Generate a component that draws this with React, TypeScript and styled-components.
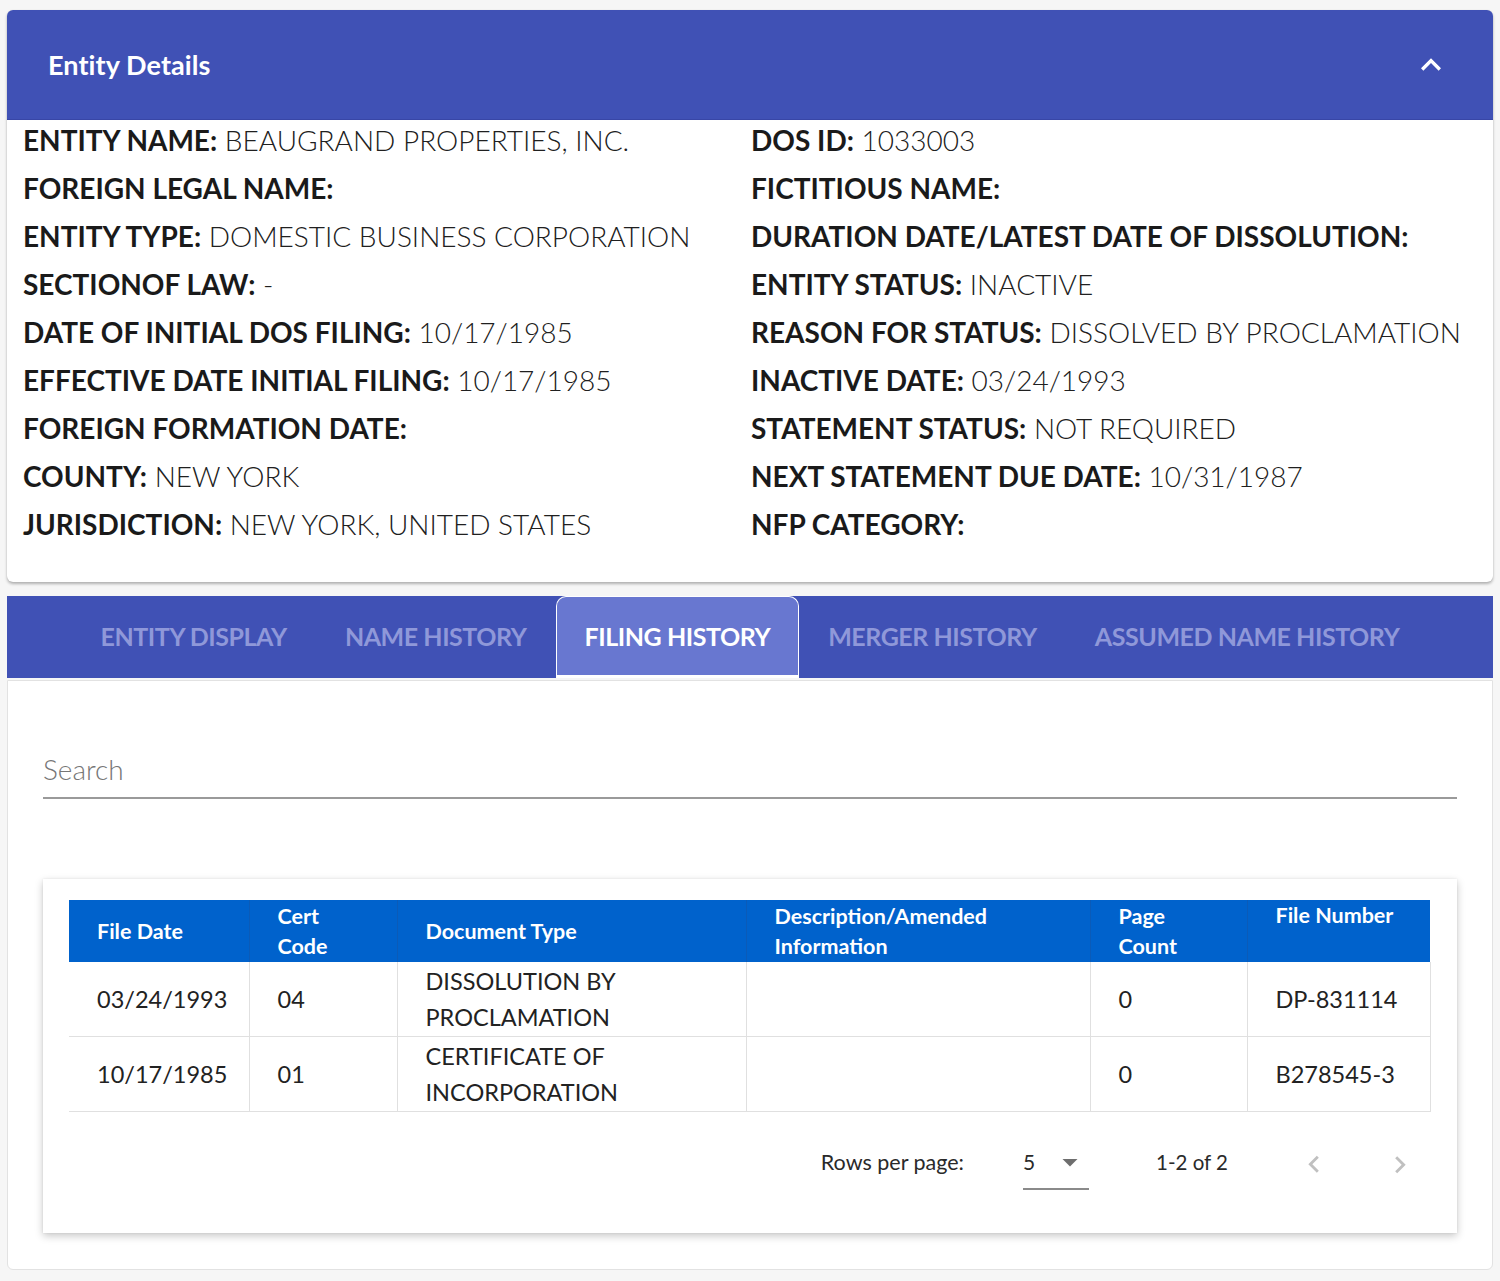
import React from "react";
import styled, { createGlobalStyle } from "styled-components";

const Global = createGlobalStyle`
  html, body { margin: 0; padding: 0; background: #f6f6f6; }
  body { font-family: Lato, "Noto Sans", Arial, sans-serif; color: #1f1f1f; }
  * { box-sizing: border-box; }
`;

const Page = styled.div`
  padding: 10px 7px 11px 7px;
  width: 1500px;
`;

const Card = styled.section`
  background: #fff;
  border-radius: 6px;
  box-shadow: 0 2px 3px rgba(0, 0, 0, 0.28), 0 0 1px rgba(0, 0, 0, 0.15);
  overflow: hidden;
`;

const CardHeader = styled.header`
  height: 110px;
  background: #4051b5;
  display: flex;
  align-items: center;
  justify-content: space-between;
  padding: 0 42px 0 41px;
  border-bottom: 1px solid #3846a6;
`;

const Title = styled.h2`
  margin: 0;
  font-size: 27px;
  font-weight: 700;
  color: #fff;
  letter-spacing: 0.1px;
`;

const IconButton = styled.span`
  display: flex;
  width: 40px;
  height: 40px;
  color: #fff;
`;

const DetailsGrid = styled.div`
  display: grid;
  grid-template-columns: 728px 1fr;
  row-gap: 8px;
  padding: 0 16px 38px 16px;
`;

const DetailRow = styled.div`
  font-size: 28px;
  line-height: 40px;
  white-space: nowrap;
  color: #202020;
  font-weight: 300;
`;

const Label = styled.span`
  font-weight: 700;
  color: #1a1a1a;
`;

const TabBar = styled.nav`
  margin-top: 14px;
  height: 82px;
  background: #4051b5;
  display: flex;
  justify-content: center;
  align-items: stretch;
`;

const Tab = styled.div<{ $active?: boolean }>`
  display: flex;
  align-items: center;
  padding: 0 28px 3px 28px;
  font-size: 25px;
  font-weight: 700;
  text-transform: uppercase;
  letter-spacing: -0.45px;
  color: ${(p) => (p.$active ? "#ffffff" : "#8f98d9")};
  background: ${(p) => (p.$active ? "#6877d0" : "transparent")};
  border: ${(p) => (p.$active ? "1px solid #ffffff" : "1px solid transparent")};
  border-bottom: none;
  border-radius: 10px 10px 0 0;
  box-shadow: ${(p) => (p.$active ? "inset 0 -3px 0 #ffffff" : "none")};
`;

const Panel = styled.section`
  margin-top: 2px;
  background: #fff;
  border: 1px solid #e2e2e2;
  border-radius: 0 0 6px 6px;
  padding: 0 35px 36px 35px;
`;

const SearchField = styled.div`
  margin-top: 70px;
  padding-bottom: 10px;
  border-bottom: 2px solid #9a9a9a;
  font-size: 28px;
  line-height: 36px;
  color: #767676;
  font-weight: 300;
`;

const Paper = styled.div`
  margin-top: 80px;
  background: #fff;
  box-shadow: 0 3px 8px rgba(0, 0, 0, 0.22), 0 0 2px rgba(0, 0, 0, 0.08);
  padding: 21px 27px 21px 26px;
`;

const Table = styled.table`
  width: 100%;
  border-collapse: collapse;
  table-layout: fixed;
`;

const HeadCell = styled.th<{ $top?: boolean }>`
  background: #0062cc;
  color: #fff;
  text-align: left;
  font-size: 21.5px;
  font-weight: 700;
  line-height: 30px;
  padding: 0 16px 0 28px;
  height: 62px;
  vertical-align: ${(p) => (p.$top ? "top" : "middle")};
  border-left: 1px solid #0b5bb8;
  &:first-child { border-left: none; }
`;

const BodyCell = styled.td`
  font-size: 23.5px;
  line-height: 36px;
  font-weight: 400;
  color: #222;
  padding: 1px 16px 1px 28px;
  vertical-align: middle;
  border-left: 1px solid #e0e0e0;
  border-bottom: 1px solid #e0e0e0;
  &:first-child { border-left: none; }
  &:last-child { border-right: 1px solid #e0e0e0; }
`;

const Pagination = styled.div`
  display: flex;
  align-items: center;
  justify-content: flex-end;
  height: 100px;
  padding-right: 13px;
  font-size: 20px;
  line-height: 30px;
  color: #2a2a2a;
  font-weight: 400;
`;

const RowsLabel = styled.span`
  font-size: 21.5px;
  margin-right: 59px;
`;

const Select = styled.div`
  width: 66px;
  height: 43px;
  display: flex;
  align-items: flex-start;
  justify-content: space-between;
  border-bottom: 2px solid #8a8a8a;
  margin-top: 13px;
  padding-bottom: 11px;
  margin-right: 67px;
  font-size: 21px;
`;

const SelectArrow = styled.span`
  display: flex;
  color: #6e6e6e;
  width: 36px;
  height: 36px;
  margin: -3px 1px -3px 0;
`;

const Range = styled.span`
  font-size: 20.5px;
  margin-right: 69px;
`;

const NavButton = styled.span<{ $gap?: number }>`
  display: flex;
  width: 34px;
  height: 34px;
  margin-top: 5px;
  color: #c0c0c0;
  margin-left: ${(p) => p.$gap ?? 0}px;
`;

const Icon = ({ d }: { d: string }) => (
  <svg viewBox="0 0 24 24" width="100%" height="100%" fill="currentColor">
    <path d={d} />
  </svg>
);

const left = [
  ["ENTITY NAME:", "BEAUGRAND PROPERTIES, INC."],
  ["FOREIGN LEGAL NAME:", ""],
  ["ENTITY TYPE:", "DOMESTIC BUSINESS CORPORATION"],
  ["SECTIONOF LAW:", " -"],
  ["DATE OF INITIAL DOS FILING:", "10/17/1985"],
  ["EFFECTIVE DATE INITIAL FILING:", "10/17/1985"],
  ["FOREIGN FORMATION DATE:", ""],
  ["COUNTY:", "NEW YORK"],
  ["JURISDICTION:", "NEW YORK, UNITED STATES"],
];

const right = [
  ["DOS ID:", "1033003"],
  ["FICTITIOUS NAME:", ""],
  ["DURATION DATE/LATEST DATE OF DISSOLUTION:", ""],
  ["ENTITY STATUS:", "INACTIVE"],
  ["REASON FOR STATUS:", "DISSOLVED BY PROCLAMATION"],
  ["INACTIVE DATE:", "03/24/1993"],
  ["STATEMENT STATUS:", "NOT REQUIRED"],
  ["NEXT STATEMENT DUE DATE:", "10/31/1987"],
  ["NFP CATEGORY:", ""],
];

const tabs = ["Entity Display", "Name History", "Filing History", "Merger History", "Assumed Name History"];

const columns: { label: React.ReactNode; width: number; top?: boolean }[] = [
  { label: "File Date", width: 180 },
  { label: <>Cert<br />Code</>, width: 148 },
  { label: "Document Type", width: 349 },
  { label: <>Description/Amended<br />Information</>, width: 344 },
  { label: <>Page<br />Count</>, width: 157 },
  { label: "File Number", width: 183, top: true },
];

const rows = [
  ["03/24/1993", "04", <>DISSOLUTION BY<br />PROCLAMATION</>, "", "0", "DP-831114"],
  ["10/17/1985", "01", <>CERTIFICATE OF<br />INCORPORATION</>, "", "0", "B278545-3"],
];

export default function App() {
  const detailRows: React.ReactNode[] = [];
  left.forEach((l, i) => {
    const r = right[i];
    detailRows.push(
      <DetailRow key={"l" + i}>
        <Label>{l[0]}</Label> {l[1]}
      </DetailRow>,
      <DetailRow key={"r" + i}>
        <Label>{r[0]}</Label> {r[1]}
      </DetailRow>
    );
  });

  return (
    <Page>
      <Global />
      <Card>
        <CardHeader>
          <Title>Entity Details</Title>
          <IconButton>
            <Icon d="M12 8l-6 6 1.41 1.41L12 10.83l4.59 4.58L18 14z" />
          </IconButton>
        </CardHeader>
        <DetailsGrid>{detailRows}</DetailsGrid>
      </Card>

      <TabBar>
        {tabs.map((t) => (
          <Tab key={t} $active={t === "Filing History"}>
            {t}
          </Tab>
        ))}
      </TabBar>

      <Panel>
        <SearchField>Search</SearchField>
        <Paper>
          <Table>
            <colgroup>
              {columns.map((c, i) => (
                <col key={i} style={{ width: c.width }} />
              ))}
            </colgroup>
            <thead>
              <tr>
                {columns.map((c, i) => (
                  <HeadCell key={i} $top={c.top}>
                    {c.label}
                  </HeadCell>
                ))}
              </tr>
            </thead>
            <tbody>
              {rows.map((r, ri) => (
                <tr key={ri}>
                  {r.map((v, ci) => (
                    <BodyCell key={ci}>{v}</BodyCell>
                  ))}
                </tr>
              ))}
            </tbody>
          </Table>
          <Pagination>
            <RowsLabel>Rows per page:</RowsLabel>
            <Select>
              <span>5</span>
              <SelectArrow>
                <Icon d="M7 10l5 5 5-5z" />
              </SelectArrow>
            </Select>
            <Range>1-2 of 2</Range>
            <NavButton>
              <Icon d="M15.41 16.09l-4.59-4.59 4.59-4.59L14 5.5l-6 6 6 6z" />
            </NavButton>
            <NavButton $gap={52}>
              <Icon d="M8.59 16.34l4.58-4.59-4.58-4.59L10 5.75l6 6-6 6z" />
            </NavButton>
          </Pagination>
        </Paper>
      </Panel>
    </Page>
  );
}
